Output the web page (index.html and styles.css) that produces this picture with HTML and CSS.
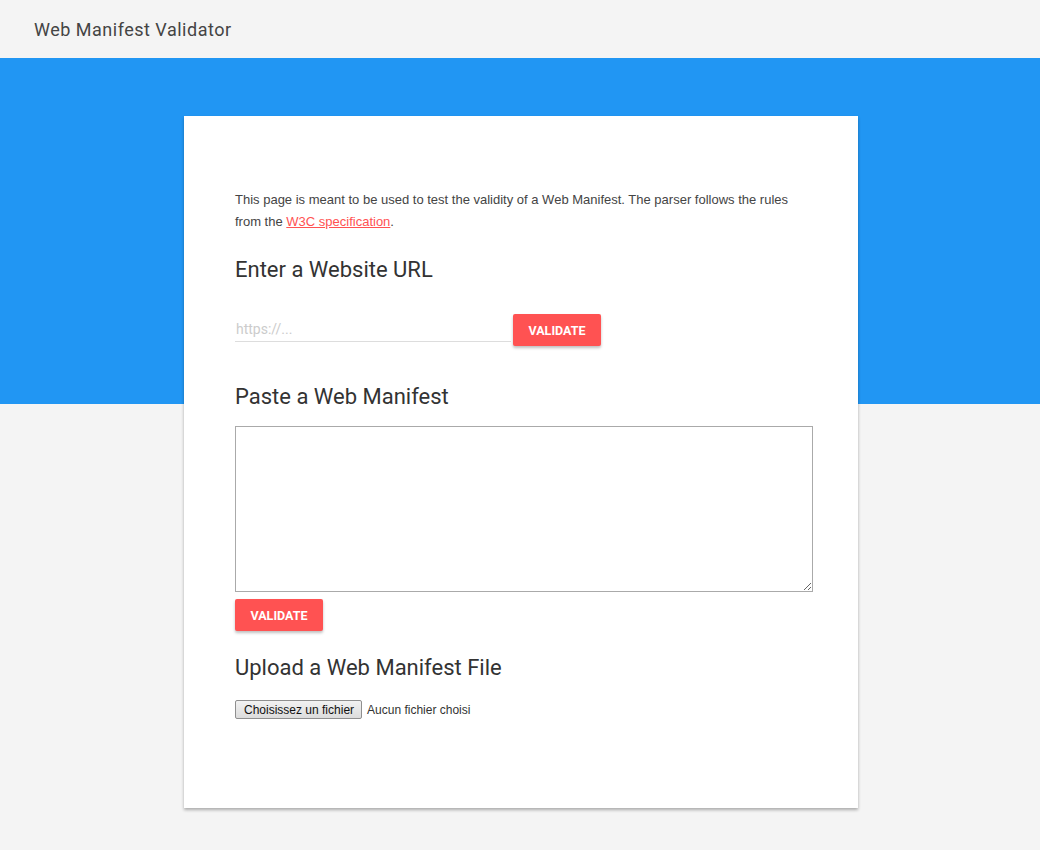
FILE: index.html
```html
<!DOCTYPE html>
<html lang="en">
<head>
  <meta charset="UTF-8" />
  <meta name="viewport" content="width=device-width, initial-scale=1.0"/>
  <title>Web Manifest Validator</title>
  <link rel="stylesheet" href="styles.css">
</head>
<body>

  <header class="topbar">
    <h1>Web Manifest Validator</h1>
  </header>

  <main class="stage">
    <section class="card">
      <p class="intro">
        This page is meant to be used to test the validity of a Web Manifest. The parser follows the rules
        from the <a href="#">W3C specification</a>.
      </p>

      <h2>Enter a Website URL</h2>
      <div class="url-row">
        <input type="text" class="url-input" placeholder="https://...">
        <button class="btn">Validate</button>
      </div>

      <h2 class="spaced">Paste a Web Manifest</h2>
      <textarea class="manifest-input"></textarea>
      <button class="btn">Validate</button>

      <h2>Upload a Web Manifest File</h2>
      <div class="file-row">
        <label class="file-btn">Choisissez un fichier<input type="file" class="file-input"></label>
        <span class="file-name">Aucun fichier choisi</span>
      </div>
    </section>
  </main>

</body>
</html>
```

FILE: styles.css
```css
:root {
  --blue: #2196f3;
  --red: #ff5252;
  --bg: #f4f4f4;
  --text: #333;
}

* {
  box-sizing: border-box;
  margin: 0;
  padding: 0;
}

body {
  background: var(--bg);
  font-family: Roboto, "Liberation Sans", sans-serif;
  color: var(--text);
}

.topbar {
  height: 58px;
  display: flex;
  align-items: center;
  padding: 0 34px;
  background: var(--bg);
}

.topbar h1 {
  font-size: 18px;
  font-weight: 400;
  color: #444;
  letter-spacing: 0.5px;
}

.stage {
  background: linear-gradient(var(--blue) 346px, var(--bg) 346px);
  padding: 58px 0 43px;
}

.card {
  width: 674px;
  margin: 0 auto 0 184px;
  background: #fff;
  padding: 73px 46px 89px 51px;
  box-shadow: 0 2px 3px rgba(0, 0, 0, 0.3);
}

.intro {
  font-family: "Liberation Sans", Arial, sans-serif;
  font-size: 13px;
  line-height: 22px;
  color: #444;
}

.intro a {
  color: var(--red);
}

h2 {
  font-size: 22px;
  font-weight: 400;
  line-height: 28px;
  color: #333;
  margin-top: 23px;
}

h2.spaced {
  margin-top: 37px;
}

.url-row {
  display: flex;
  align-items: flex-end;
  margin-top: 30px;
}

.url-input {
  width: 276px;
  height: 27px;
  margin-right: 2px;
  margin-bottom: 4px;
  border: none;
  border-bottom: 1px solid #ddd;
  font-family: Roboto, sans-serif;
  font-size: 14px;
  color: #333;
  outline: none;
  padding: 2px 1px 0;
}

.url-input::placeholder {
  color: #ccc;
}

.btn {
  display: block;
  width: 88px;
  height: 32px;
  background: var(--red);
  color: #fff;
  border: none;
  border-radius: 2px;
  font-family: Roboto, sans-serif;
  font-weight: 700;
  font-size: 12.5px;
  text-transform: uppercase;
  box-shadow: 0 2px 3px rgba(0, 0, 0, 0.25);
  cursor: pointer;
}

.manifest-input {
  display: block;
  width: 578px;
  height: 166px;
  margin: 15px 0 7px;
  border: 1px solid #aaa;
  resize: vertical;
  font-family: "Liberation Mono", monospace;
  font-size: 13px;
  padding: 4px;
}

.file-row {
  display: flex;
  align-items: center;
  margin-top: 18px;
  font-family: "Liberation Sans", Arial, sans-serif;
  font-size: 12px;
  color: #333;
}

.file-btn {
  height: 19px;
  padding: 0 7px 0 8px;
  display: flex;
  align-items: center;
  background: linear-gradient(#f2f2f2, #dcdcdc);
  border: 1px solid #8f8f8f;
  border-radius: 2px;
  color: #111;
  cursor: pointer;
}

.file-input {
  display: none;
}

.file-name {
  margin-left: 5px;
}
```
